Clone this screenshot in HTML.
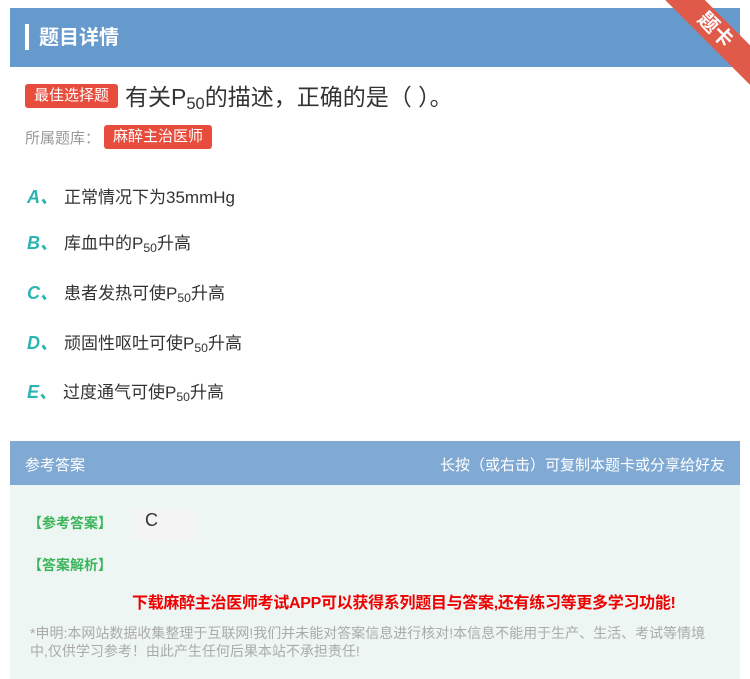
<!DOCTYPE html>
<html><head><meta charset="utf-8"><style>
body{margin:0;width:750px;height:679px;background:#fff;font-family:"Liberation Sans","Noto Sans CJK SC",sans-serif;position:relative;overflow:hidden}
.hd{position:absolute;left:10px;top:8px;width:730px;height:59px;background:#6699cc}
.hd .bar{position:absolute;left:15px;top:16px;width:4px;height:26px;background:#fff}
.hd .t{position:absolute;left:29px;top:13px;color:#fff;font-size:20px;font-weight:bold}
.rib{position:absolute;right:-30px;top:16px;width:130px;height:28px;background:#e05a4a;transform:rotate(45deg);color:#fff;text-align:center;font-size:20px;line-height:28px;font-weight:bold}
.tag{display:inline-block;background:#e74c3c;color:#fff;border-radius:3px;font-size:15px;padding:0 9px;line-height:24px}
.q{position:absolute;left:25px;top:78px;font-size:23px;color:#333;display:flex;align-items:center;gap:7px}
.lib{position:absolute;left:25px;top:125px;font-size:15px;color:#999;display:flex;align-items:center;gap:4px}
.opt{position:absolute;left:27px;font-size:17px;color:#333}
.opt b{color:#2bb5b0;font-style:italic;font-size:18px;margin-right:6px}
sub{font-size:0.72em;vertical-align:-0.25em}
.ah{position:absolute;left:10px;top:441px;width:730px;height:44px;background:#80aad4;color:#fff;font-size:15px}
.ab{position:absolute;left:10px;top:485px;width:730px;height:194px;background:#eef6f4}
.g{color:#3cb55a;font-weight:bold;font-size:14px;position:absolute}
</style></head><body>
<div class="hd"><div class="bar"></div><div class="t">题目详情</div></div>
<div class="rib">题卡</div>
<div class="q"><span class="tag">最佳选择题</span><span>有关P<sub>50</sub>的描述，正确的是（ ）。</span></div>
<div class="lib">所属题库：<span class="tag" style="font-size:15px">麻醉主治医师</span></div>
<div class="opt" style="top:183px"><b>A、</b>正常情况下为35mmHg</div>
<div class="opt" style="top:229px"><b>B、</b>库血中的P<sub>50</sub>升高</div>
<div class="opt" style="top:279px"><b>C、</b>患者发热可使P<sub>50</sub>升高</div>
<div class="opt" style="top:329px"><b>D、</b>顽固性呕吐可使P<sub>50</sub>升高</div>
<div class="opt" style="top:378px"><b>E、</b>过度通气可使P<sub>50</sub>升高</div>
<div class="ah"><span style="position:absolute;left:15px;top:13px">参考答案</span><span style="position:absolute;right:15px;top:13px">长按（或右击）可复制本题卡或分享给好友</span></div>
<div class="ab">
<div class="g" style="left:18px;top:28px">【参考答案】</div>
<div style="position:absolute;left:121px;top:25px;width:64px;height:30px;background:#f4f4f4;font-size:18px;color:#333;padding-left:14px;box-sizing:border-box">C</div>
<div class="g" style="left:18px;top:70px">【答案解析】</div>
<div style="position:absolute;left:122px;top:104px;color:#e00;font-weight:bold;font-size:16px;letter-spacing:-0.3px">下载麻醉主治医师考试APP可以获得系列题目与答案,还有练习等更多学习功能!</div>
<div style="position:absolute;left:20px;top:139px;width:690px;color:#aaa;font-size:14px;line-height:18px">*申明:本网站数据收集整理于互联网!我们并未能对答案信息进行核对!本信息不能用于生产、生活、考试等情境中,仅供学习参考！由此产生任何后果本站不承担责任!</div>
</div>
</body></html>
